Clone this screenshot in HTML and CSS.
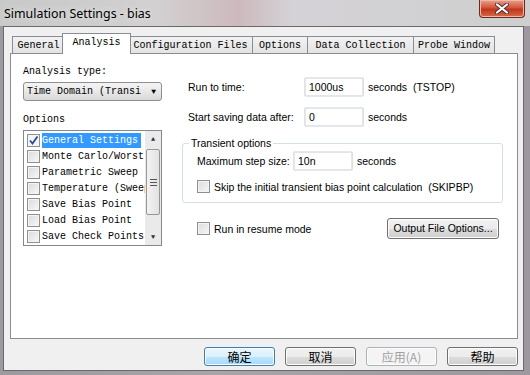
FILE: index.html
```html
<!DOCTYPE html>
<html lang="en">

<head>
    <meta charset="UTF-8">
    <title>Simulation Settings - bias</title>
    <link rel="stylesheet" href="styles.css">
</head>

<body>
    <div class="window">
        <div class="titlebar">
            <span class="title">Simulation Settings - bias</span>
            <a class="close">
                <svg width="14" height="11" viewBox="0 0 14 11">
                    <path d="M2 1.5 L12 9.5 M12 1.5 L2 9.5" stroke="#4a3030" stroke-width="4" stroke-linecap="round"/>
                    <path d="M2 1.5 L12 9.5 M12 1.5 L2 9.5" stroke="#fff" stroke-width="2.2" stroke-linecap="round"/>
                </svg>
            </a>
        </div>
        <div class="client">
            <div class="tabs">
                <div class="tab t1">General</div>
                <div class="tab t2 active">Analysis</div>
                <div class="tab t3">Configuration Files</div>
                <div class="tab t4">Options</div>
                <div class="tab t5">Data Collection</div>
                <div class="tab t6">Probe Window</div>
            </div>
            <div class="panel">
                <div class="leftcol">
                    <div class="mlabel">Analysis type:</div>
                    <div class="combo">
                        <span>Time Domain (Transi</span>
                        <span class="arrow">&#9660;</span>
                    </div>
                    <div class="mlabel opts">Options</div>
                    <div class="listbox">
                        <div class="items">
                            <div class="item"><span class="cb checked"><svg width="11" height="11" viewBox="0 0 11 11"><path d="M2 5.5 L4.5 8.5 L9.5 1.5" fill="none" stroke="#2a4a9a" stroke-width="1.8"/></svg></span><span class="txt sel">General Settings</span></div>
                            <div class="item"><span class="cb"></span><span class="txt">Monte Carlo/Worst</span></div>
                            <div class="item"><span class="cb"></span><span class="txt">Parametric Sweep</span></div>
                            <div class="item"><span class="cb"></span><span class="txt">Temperature (Sweep)</span></div>
                            <div class="item"><span class="cb"></span><span class="txt">Save Bias Point</span></div>
                            <div class="item"><span class="cb"></span><span class="txt">Load Bias Point</span></div>
                            <div class="item"><span class="cb"></span><span class="txt">Save Check Points</span></div>
                        </div>
                        <div class="vscroll">
                            <div class="sbtn">&#9650;</div>
                            <div class="track">
                                <div class="thumb"><span class="grip"></span></div>
                            </div>
                            <div class="sbtn">&#9660;</div>
                        </div>
                    </div>
                </div>
                <div class="rightcol">
                    <div class="row">
                        <span class="lbl">Run to time:</span>
                        <span class="edit">1000us</span>
                        <span>seconds&nbsp; (TSTOP)</span>
                    </div>
                    <div class="row">
                        <span class="lbl">Start saving data after:</span>
                        <span class="edit">0</span>
                        <span>seconds</span>
                    </div>
                    <fieldset class="group">
                        <legend>Transient options</legend>
                        <div class="row">
                            <span class="lbl small">Maximum step size:</span>
                            <span class="edit">10n</span>
                            <span>seconds</span>
                        </div>
                        <div class="check">
                            <span class="cb"></span>
                            <span>Skip the initial transient bias point calculation&nbsp; (SKIPBP)</span>
                        </div>
                    </fieldset>
                    <div class="bottomrow">
                        <div class="check">
                            <span class="cb"></span>
                            <span>Run in resume mode</span>
                        </div>
                        <div class="btn wide">Output File Options...</div>
                    </div>
                </div>
            </div>
            <div class="buttons">
                <div class="btn dlg default">确定</div>
                <div class="btn dlg">取消</div>
                <div class="btn dlg disabled">应用(A)</div>
                <div class="btn dlg">帮助</div>
            </div>
        </div>
    </div>
</body>

</html>
```
FILE: styles.css
```css
html, body {
    margin: 0;
    padding: 0;
}

body {
    width: 530px;
    height: 375px;
    overflow: hidden;
    background: linear-gradient(90deg, #9c9aa0, #a8a4a8 40%, #9d98a0);
}

.window {
    display: flex;
    flex-direction: column;
    height: 375px;
}

.titlebar {
    height: 26px;
    flex: none;
    display: flex;
    justify-content: space-between;
    align-items: flex-start;
    background: linear-gradient(90deg, #c9c9c9 0%, #d2d0d0 30%, #cdb9bd 45%, #d4d2d6 55%, #cfcfcf 100%);
}

.title {
    font-family: "Noto Sans", sans-serif;
    font-size: 12.4px;
    color: #000;
    padding: 5px 0 0 4px;
    text-shadow: 0 0 6px #f0f0f0;
}

.close {
    width: 44px;
    height: 17px;
    margin-right: 5px;
    border: 1px solid #6c2a1e;
    border-top: none;
    border-radius: 0 0 4px 4px;
    background: linear-gradient(#e8a08e, #d4543a 45%, #c0361c 55%, #d86a48);
    display: flex;
    justify-content: center;
    align-items: center;
    box-shadow: inset 0 0 0 1px #f0b8a8;
}

.client {
    flex: 1;
    margin: 0 6px 4px 3px;
    border: 1px solid #6a6a6a;
    background: #f0f0f0;
    display: flex;
    flex-direction: column;
}

.tabs {
    display: flex;
    align-items: flex-end;
    height: 26px;
    padding-left: 8px;
    font-family: "Liberation Mono", monospace;
    font-size: 10px;
}

.tab {
    height: 17px;
    line-height: 17px;
    box-sizing: border-box;
    border: 1px solid #898c95;
    border-bottom: none;
    background: linear-gradient(#f2f2f2, #e3e3e3);
    text-align: center;
    margin-right: -1px;
}

.t1 { width: 53px; }
.t2 { width: 69px; }
.t3 { width: 125px; }
.t4 { width: 56px; }
.t5 { width: 107px; }
.t6 { width: 82px; }

.tab.active {
    height: 21px;
    line-height: 18px;
    background: #fff;
    margin-bottom: -1px;
    position: relative;
    z-index: 1;
    margin-left: -2px;
    margin-right: -3px;
}

.panel {
    height: 286px;
    box-sizing: border-box;
    margin: 0 5px 0 6px;
    border: 1px solid #898c95;
    background: #fff;
    display: flex;
    padding: 11px 0 0 12px;
}

.leftcol {
    width: 139px;
    font-family: "Liberation Mono", monospace;
    font-size: 10px;
}

.mlabel {
    height: 14px;
    line-height: 14px;
}

.combo {
    margin-top: 3px;
    height: 19px;
    box-sizing: border-box;
    border: 1px solid #8e8f8f;
    border-radius: 3px;
    background: linear-gradient(#f4f4f4, #e8e8e8 50%, #d8d8d8);
    display: flex;
    align-items: center;
    justify-content: space-between;
    padding: 0 5px 0 3px;
    white-space: nowrap;
    overflow: hidden;
}

.combo .arrow {
    font-size: 8px;
    margin-left: 1px;
}

.opts {
    margin-top: 12px;
}

.listbox {
    margin-top: 3px;
    height: 116px;
    box-sizing: border-box;
    border: 1px solid #828790;
    display: flex;
}

.items {
    flex: 1;
    overflow: hidden;
    padding: 1px 0 0 3px;
}

.item {
    height: 16px;
    display: flex;
    align-items: center;
    gap: 2px;
    white-space: nowrap;
}

.txt {
    height: 15px;
    line-height: 15px;
    padding-right: 3px;
}

.txt.sel {
    background: #3399ff;
    color: #fff;
}

.cb {
    width: 13px;
    height: 13px;
    box-sizing: border-box;
    flex: none;
    border: 1px solid #8f8f8f;
    background: linear-gradient(135deg, #dcdcdc, #f6f6f6);
    box-shadow: inset 0 0 0 1px #f4f4f4;
    display: flex;
    align-items: center;
    justify-content: center;
}

.cb.checked {
    background: #f4f4f4;
}

.vscroll {
    width: 16px;
    flex: none;
    display: flex;
    flex-direction: column;
    background: #eaeaea;
}

.sbtn {
    height: 16px;
    font-size: 7px;
    line-height: 16px;
    text-align: center;
    color: #333;
}

.track {
    flex: 1;
    padding: 2px 0 14px;
    display: flex;
}

.thumb {
    flex: 1;
    margin: 0 1px;
    border: 1px solid #979797;
    border-radius: 2px;
    background: linear-gradient(90deg, #f3f3f3, #e2e2e2);
    display: flex;
    align-items: center;
    justify-content: center;
}

.grip {
    width: 7px;
    height: 5px;
    border-top: 1px solid #555;
    border-bottom: 1px solid #555;
    position: relative;
}

.grip::after {
    content: "";
    position: absolute;
    left: 0;
    right: 0;
    top: 2px;
    border-top: 1px solid #555;
}

.rightcol {
    margin-left: 20px;
    width: 321px;
    font-family: "Liberation Sans", Arial, sans-serif;
    font-size: 10.5px;
    color: #000;
    padding-top: 12px;
    white-space: nowrap;
}

.row {
    display: flex;
    align-items: center;
    height: 20px;
    margin-bottom: 10px;
    padding-left: 6px;
}

.lbl {
    width: 116px;
    flex: none;
}

.lbl.small {
    width: 96px;
}

.edit {
    width: 60px;
    height: 20px;
    box-sizing: border-box;
    border: 1px solid #abadb3;
    border-top-color: #e3e9ef;
    border-right-color: #dbdfe6;
    border-left-color: #e2e3ea;
    border-bottom-color: #e3e9ef;
    box-shadow: inset 0 0 0 0.5px #c8ccd4;
    border-radius: 2px;
    padding: 2px 4px;
    line-height: 15px;
    margin-right: 4px;
}

.group {
    margin: 4px 0 0;
    padding: 5px 0 9px 14px;
    border: 1px solid #d5dfe5;
    border-radius: 3px;
    height: 66px;
    box-sizing: border-box;
}

.group legend {
    padding: 0 2px;
    margin-left: -8px;
    line-height: 12px;
}

.group .row {
    padding-left: 0;
    margin-bottom: 9px;
    margin-top: -3px;
}

.check {
    display: flex;
    align-items: center;
    gap: 4px;
    height: 13px;
}

.bottomrow {
    display: flex;
    justify-content: space-between;
    align-items: center;
    padding: 15px 4px 0 15px;
}

.btn {
    box-sizing: border-box;
    border: 1px solid #707070;
    border-radius: 3px;
    background: linear-gradient(#f2f2f2, #ebebeb 50%, #dddddd 51%, #cfcfcf);
    box-shadow: inset 0 0 0 1px #fcfcfc;
    text-align: center;
}

.btn.wide {
    width: 112px;
    height: 21px;
    line-height: 19px;
}

.buttons {
    display: flex;
    justify-content: flex-end;
    gap: 10px;
    padding: 8px 5px 0 0;
}

.btn.dlg {
    width: 71px;
    height: 19px;
    line-height: 17px;
    font-family: "Noto Sans CJK SC", sans-serif;
    font-size: 12px;
}

.btn.default {
    border-color: #3c7fb1;
    background: linear-gradient(#eaf6fd, #d9f0fc 50%, #bee6fd 51%, #a7d9f5);
}

.btn.disabled {
    border-color: #adb2b5;
    background: #f4f4f4;
    color: #a0a0a0;
}
```
